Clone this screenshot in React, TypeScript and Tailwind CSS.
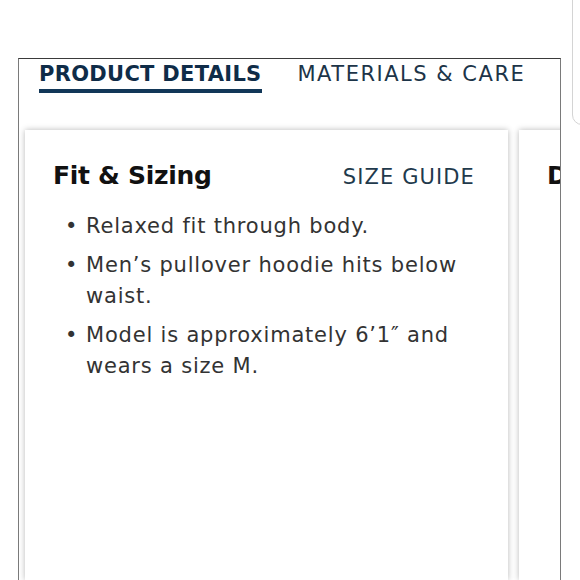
import React from "react";

const items = [
  "Relaxed fit through body.",
  "Men\u2019s pullover hoodie hits below waist.",
  "Model is approximately 6\u20191\u2033 and wears a size M.",
];

export default function App() {
  return (
    <div
      className="relative w-[580px] h-[580px] overflow-hidden bg-white"
      style={{ fontFamily: "'DejaVu Sans', 'Liberation Sans', sans-serif" }}
    >
      {/* right sliver of neighbouring panel */}
      <div className="absolute right-[-20px] top-[-10px] w-[28px] h-[135px] rounded-bl-[10px] border border-[#d4d4d4] bg-white" />

      <div className="ml-[18px] mt-[58px] w-[543px] h-[522px] border-t border-x border-t-[#3a3a3a] border-x-[#7a7a7a] overflow-hidden flex flex-col">
        {/* tabs */}
        <div className="flex pl-[20px] gap-[36px] h-[71px]">
          <div className="flex flex-col">
            <span className="text-[21px] leading-[28px] font-bold text-[#0f2c48] tracking-[0.3px] pt-[1px] whitespace-nowrap">
              PRODUCT DETAILS
            </span>
            <div className="mt-[1px] h-[4px] bg-[#123758]" />
          </div>
          <span className="text-[21px] leading-[28px] font-normal text-[#1c3448] tracking-[1.5px] pt-[1px] whitespace-nowrap">
            MATERIALS &amp; CARE
          </span>
        </div>

        {/* cards carousel */}
        <div className="flex gap-[11px] pl-[6px] flex-1">
          <div className="w-[483px] shrink-0 bg-white shadow-[0_0_6px_rgba(0,0,0,0.28)] pt-[28px] pl-[28px] pr-[33px]">
            <div className="flex items-baseline justify-between">
              <h2 className="text-[25px] leading-[36px] font-bold text-[#111] tracking-[-0.3px]">Fit &amp; Sizing</h2>
              <span className="text-[21px] leading-[36px] text-[#1f3a4c] tracking-[1.1px]">SIZE GUIDE</span>
            </div>
            <ul className="mt-[16px] flex flex-col gap-[8px]">
              {items.map((t) => (
                <li key={t} className="flex text-[21px] leading-[31px] text-[#333] tracking-[0.8px]">
                  <span className="w-[33px] shrink-0 pl-[12px]">•</span>
                  <span>{t}</span>
                </li>
              ))}
            </ul>
          </div>
          <div className="w-[483px] shrink-0 bg-white shadow-[0_0_6px_rgba(0,0,0,0.28)] pt-[28px] pl-[28px]">
            <h2 className="text-[25px] leading-[36px] font-bold text-[#111]">Details</h2>
          </div>
        </div>
      </div>
    </div>
  );
}
